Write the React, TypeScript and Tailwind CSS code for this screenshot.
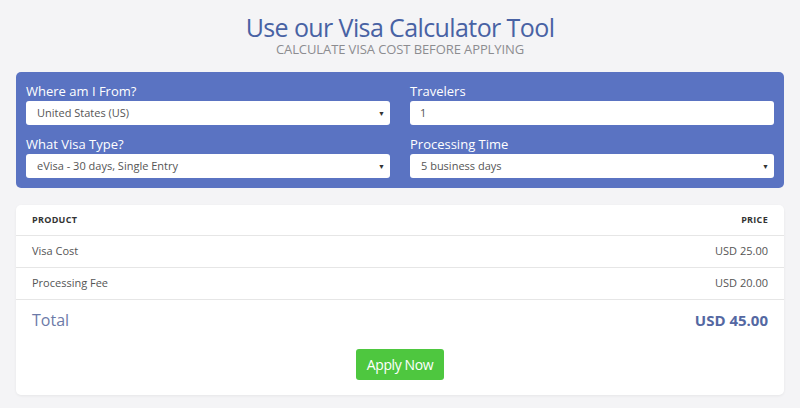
import React from 'react';

const Select: React.FC<{ value: string }> = ({ value }) => (
  <div className="h-[24px] bg-white rounded-[3px] flex items-center justify-between pl-[11px] pr-[5px]">
    <span className="text-[11px] text-[#555]">{value}</span>
    <span className="text-[7px] text-[#333] leading-none">▼</span>
  </div>
);

const Field: React.FC<{ label: string; children: React.ReactNode }> = ({ label, children }) => (
  <div className="flex flex-col">
    <label className="text-[13px] text-white leading-[16px] mb-[2px]">{label}</label>
    {children}
  </div>
);

const App: React.FC = () => {
  return (
    <div className="w-[800px] h-[408px] bg-[#f4f4f6] font-['Open_Sans',sans-serif] overflow-hidden px-[16px]">
      {/* Heading */}
      <div className="flex flex-col items-center pt-[12px]">
        <h1 className="text-[25px] leading-[30px] text-[#4862a4] tracking-[-0.6px]">Use our Visa Calculator Tool</h1>
        <p className="text-[13px] leading-[15px] text-[#8c8c90] tracking-[-0.1px]">CALCULATE VISA COST BEFORE APPLYING</p>
      </div>

      {/* Calculator */}
      <div className="mt-[15px] bg-[#5a73c2] rounded-[5px] px-[10px] pt-[11px] pb-[10px] grid grid-cols-2 gap-x-[20px] gap-y-[11px]">
        <Field label="Where am I From?">
          <Select value="United States (US)" />
        </Field>
        <Field label="Travelers">
          <div className="h-[24px] bg-white rounded-[3px] flex items-center pl-[10px] text-[11px] text-[#555]">1</div>
        </Field>
        <Field label="What Visa Type?">
          <Select value="eVisa - 30 days, Single Entry" />
        </Field>
        <Field label="Processing Time">
          <Select value="5 business days" />
        </Field>
      </div>

      {/* Summary */}
      <div className="mt-[17px] bg-white rounded-[5px] shadow-[0_1px_3px_rgba(0,0,0,0.06)] pb-[15px]">
        <div className="flex justify-between items-center h-[31px] px-[16px] border-b border-[#e6e6e6] text-[9px] font-bold text-[#333] tracking-[0.3px]">
          <span>PRODUCT</span>
          <span>PRICE</span>
        </div>
        <div className="flex justify-between items-center h-[32px] px-[16px] border-b border-[#e6e6e6] text-[11px] text-[#555]">
          <span>Visa Cost</span>
          <span>USD 25.00</span>
        </div>
        <div className="flex justify-between items-center h-[32px] px-[16px] border-b border-[#e6e6e6] text-[11px] text-[#555]">
          <span>Processing Fee</span>
          <span>USD 20.00</span>
        </div>
        <div className="flex justify-between items-center h-[40px] px-[16px]">
          <span className="text-[16px] text-[#6c7aa8]">Total</span>
          <span className="text-[15px] font-bold text-[#5468a2]">USD 45.00</span>
        </div>
        <div className="flex justify-center mt-[9px]">
          <button className="w-[88px] h-[31px] bg-[#4ec73f] rounded-[3px] text-white text-[14px] tracking-[-0.4px]">Apply Now</button>
        </div>
      </div>
    </div>
  );
};

export default App;
